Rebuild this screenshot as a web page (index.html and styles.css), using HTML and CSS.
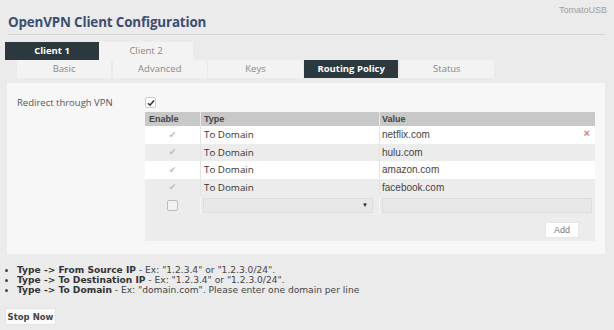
FILE: index.html
```html
<!DOCTYPE html>
<html>
<head>
<meta charset="utf-8">
<link rel="stylesheet" href="styles.css">
</head>
<body>
<div class="header">
  <h1 class="title">OpenVPN Client Configuration</h1>
  <span class="brand">TomatoUSB</span>
</div>
<div class="rule"></div>
<div class="tabs">
  <div class="tab active">Client 1</div>
  <div class="tab">Client 2</div>
</div>
<div class="subtabs">
  <div class="subtab">Basic</div>
  <div class="subtab">Advanced</div>
  <div class="subtab">Keys</div>
  <div class="subtab active">Routing Policy</div>
  <div class="subtab">Status</div>
</div>
<div class="panel">
  <div class="field">
    <span class="label">Redirect through VPN</span>
    <span class="cbox"><svg width="8" height="8" viewBox="0 0 8 8"><path d="M1 4.2 L3 6.2 L7 1.6" fill="none" stroke="#333" stroke-width="1.6"/></svg></span>
  </div>
  <div class="grid">
    <div class="row head">
      <div class="c1">Enable</div>
      <div class="c2">Type</div>
      <div class="c3">Value</div>
    </div>
    <div class="row">
      <div class="c1"><span class="tick">✔</span></div>
      <div class="c2">To Domain</div>
      <div class="c3 val">netflix.com<span class="del">×</span></div>
    </div>
    <div class="row alt">
      <div class="c1"><span class="tick">✔</span></div>
      <div class="c2">To Domain</div>
      <div class="c3 val">hulu.com</div>
    </div>
    <div class="row">
      <div class="c1"><span class="tick">✔</span></div>
      <div class="c2">To Domain</div>
      <div class="c3 val">amazon.com</div>
    </div>
    <div class="row alt">
      <div class="c1"><span class="tick">✔</span></div>
      <div class="c2">To Domain</div>
      <div class="c3 val">facebook.com</div>
    </div>
    <div class="row edit">
      <div class="c1"><span class="ebox"></span></div>
      <div class="c2"><div class="select"><span class="arrow">▼</span></div></div>
      <div class="c3"><div class="input"></div></div>
    </div>
    <div class="actions"><button class="add">Add</button></div>
  </div>
</div>
<ul class="notes">
  <li><b>Type -&gt; From Source IP</b> - Ex: "1.2.3.4" or "1.2.3.0/24".</li>
  <li><b>Type -&gt; To Destination IP</b> - Ex: "1.2.3.4" or "1.2.3.0/24".</li>
  <li><b>Type -&gt; To Domain</b> - Ex: "domain.com". Please enter one domain per line</li>
</ul>
<button class="stop">Stop Now</button>
</body>
</html>
```
FILE: styles.css
```css
body {
  margin: 0;
  background: #ebebeb;
  font-family: "DejaVu Sans", Verdana, sans-serif;
  color: #333;
  width: 614px;
  height: 330px;
  overflow: hidden;
}
.header {
  display: flex;
  justify-content: space-between;
  align-items: flex-start;
  padding: 0 7px 0 8px;
  height: 34px;
}
.title {
  margin: 14px 0 0;
  font-family: "Open Sans", sans-serif;
  font-weight: 700;
  font-size: 13.4px;
  line-height: 17px;
  color: #3c4d72;
  letter-spacing: -0.15px;
}
.brand {
  margin-top: 5px;
  font-family: "Liberation Sans", sans-serif;
  font-size: 9px;
  color: #a0a0a0;
}
.rule {
  height: 1px;
  background: #d6d6d6;
  margin: 0 9px 0 8px;
}
.tabs {
  display: flex;
  margin: 7px 0 0 5px;
  height: 18px;
}
.tab {
  width: 94px;
  height: 18px;
  line-height: 18px;
  text-align: center;
  font-family: "Open Sans", sans-serif;
  font-size: 9.5px;
  color: #888;
  background: #f3f3f4;
}
.tab.active {
  background: #2b383e;
  color: #fff;
  font-weight: 700;
}
.subtabs {
  display: flex;
  gap: 1.5px;
  margin: 0 0 0 17px;
  height: 18px;
}
.subtab {
  width: 94.2px;
  height: 18px;
  line-height: 18px;
  text-align: center;
  font-family: "Open Sans", sans-serif;
  font-size: 9.5px;
  color: #888;
  background: #f3f3f4;
}
.subtab.active {
  background: #2b383e;
  color: #fff;
  font-weight: 700;
}
.panel {
  margin: 5px 9px 0 7px;
  height: 171px;
  background: #f7f7f8;
  box-sizing: border-box;
  padding-top: 12px;
}
.field {
  display: flex;
  align-items: center;
  height: 15px;
}
.label {
  width: 128px;
  padding-left: 10px;
  font-family: "Open Sans", sans-serif;
  font-size: 9.5px;
  color: #555;
}
.cbox {
  width: 9px;
  height: 9px;
  border: 1px solid #ccc;
  border-radius: 2px;
  background: #fff;
  display: flex;
  align-items: center;
  justify-content: center;
}
.grid {
  margin: 2px 0 0 138px;
  width: 450px;
  height: 129px;
  background: #ececec;
}
.row {
  display: flex;
  height: 17.5px;
  background: #fff;
  font-size: 10px;
}
.row.alt {
  background: #ececec;
}
.row.head {
  height: 14px;
  background: #c8c8c8;
  font-family: "Liberation Sans", sans-serif;
  font-weight: 700;
  font-size: 9px;
  color: #444;
}
.row > div {
  display: flex;
  align-items: center;
  box-sizing: border-box;
}
.c1 {
  width: 56px;
  justify-content: center;
  border-right: 1px solid #e4e4e4;
}
.head .c1 {
  justify-content: flex-start;
  padding-left: 4px;
  border-right-color: #e8e8e8;
}
.c2 {
  width: 179px;
  padding-left: 3px;
  border-right: 1px solid #e4e4e4;
  font-family: "Open Sans", sans-serif;
  font-size: 9.8px;
  color: #333;
}
.head .c2 {
  font-family: "Liberation Sans", sans-serif;
  font-size: 9px;
  color: #444;
  border-right-color: #e8e8e8;
}
.c3 {
  flex: 1;
  padding-left: 2px;
  font-family: "Liberation Sans", sans-serif;
  font-size: 10px;
  color: #444;
  position: relative;
}
.head .c3 {
  font-size: 9px;
}
.tick {
  font-size: 9px;
  color: #bbb;
}
.del {
  position: absolute;
  right: 5px;
  top: 1px;
  font-size: 11px;
  font-weight: 700;
  color: #e07a7a;
}
.row.edit {
  background: #ececec;
  height: 18px;
}
.edit .c1, .edit .c2 {
  border-right-color: #f4f4f4;
}
.ebox {
  width: 9px;
  height: 9px;
  border: 1px solid #bbb;
  border-radius: 2px;
  background: #f3f3f3;
}
.select {
  width: 170px;
  height: 15px;
  margin-left: -1px;
  border: 1px solid #ddd;
  box-sizing: border-box;
  background: #e8e8e8;
  display: flex;
  align-items: center;
  justify-content: flex-end;
  padding-right: 4px;
}
.arrow {
  font-size: 6px;
  color: #222;
}
.input {
  width: 210px;
  height: 15px;
  border: 1px solid #ddd;
  box-sizing: border-box;
  background: #e8e8e8;
}
.actions {
  display: flex;
  justify-content: flex-end;
  padding: 8px 16px 0 0;
}
.add {
  width: 34px;
  height: 16px;
  border: 1px solid #e6e6e6;
  background: #fff;
  font-family: "Liberation Sans", sans-serif;
  font-size: 9px;
  color: #777;
  padding: 0;
}
.notes {
  margin: 11px 0 0;
  padding: 0 0 0 17px;
  font-family: "DejaVu Sans", sans-serif;
  font-size: 9.1px;
  line-height: 10px;
  color: #444;
}
.notes b {
  color: #333;
}
.stop {
  display: block;
  margin: 13px 0 0 5px;
  width: 51px;
  height: 17px;
  padding: 0;
  border: 1px solid #e4e4e4;
  background: #fafafa;
  font-family: "DejaVu Sans", sans-serif;
  font-weight: 700;
  font-size: 8.5px;
  color: #444;
}
```
